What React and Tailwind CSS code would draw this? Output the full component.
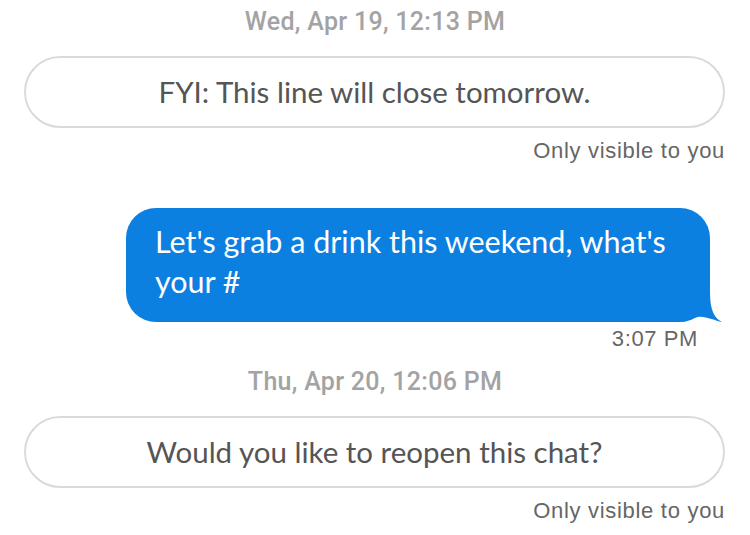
import React from "react";

function Stamp({ children, className = "" }) {
  return (
    <div className={"h-[43px] flex items-center justify-center text-[25px] font-medium tracking-[0.3px] text-[#a3a3a3] font-['Roboto',sans-serif] " + className}>
      {children}
    </div>
  );
}

function Pill({ children }) {
  return (
    <div className="ml-[24px] w-[701px] h-[72px] rounded-full border-2 border-[#dadada] flex items-center justify-center text-[29.5px] text-[#555555] font-['Lato',sans-serif]">
      {children}
    </div>
  );
}

function Note() {
  return (
    <div className="h-[44px] flex items-center justify-end pr-[25px] text-[22px] text-[#666666] font-['Liberation_Sans',Arial,sans-serif] tracking-[0.7px]">
      Only visible to you
    </div>
  );
}

export default function App() {
  return (
    <div className="w-[750px] h-[535px] bg-white overflow-hidden">
      <Stamp>Wed, Apr 19, 12:13 PM</Stamp>
      <div className="mt-[13px]">
        <Pill>FYI: This line will close tomorrow.</Pill>
      </div>
      <Note />
      <div className="mt-[36px] relative ml-[126px] w-[584px]">
        <div className="h-[114px] rounded-[30px] bg-[#0c80e1] pl-[29px] pr-[20px] pt-[13px] text-white text-[30.5px] leading-[40px] font-['Lato',sans-serif]">
          Let's grab a drink this weekend, what's your #
        </div>
        <svg className="absolute right-[-12px] bottom-0" width="40" height="30" viewBox="0 0 40 30">
          <path d="M0 0 L28 0 C28 18 32 26 40 30 C33 29 24 24 16 25 C10 26 5 29 0 30 Z" fill="#0c80e1" />
        </svg>
      </div>
      <div className="h-[33px] flex items-center justify-end pr-[52px] text-[22px] text-[#666666] font-['Liberation_Sans',Arial,sans-serif] tracking-[0.6px]">
        3:07 PM
      </div>
      <Stamp className="mt-[5px]">Thu, Apr 20, 12:06 PM</Stamp>
      <div className="mt-[13px]">
        <Pill>Would you like to reopen this chat?</Pill>
      </div>
      <Note />
    </div>
  );
}
